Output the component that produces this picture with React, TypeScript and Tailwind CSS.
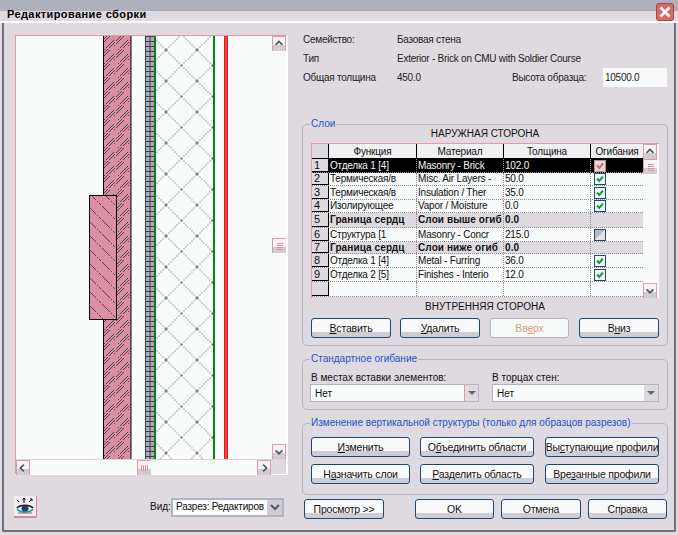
import React from "react";

function Btn({ label, u, w, disabled, ml }: { label: string; u?: number; w: string; disabled?: boolean; ml?: string }) {
  const i = u ?? -1;
  return (
    <button className={`${w} ${ml ?? ""} h-[20px] shrink-0 rounded-[3px] border ${disabled ? "border-[#b5b5c2] bg-[#f8f9f9] text-[#e0a080]" : "border-[#1c4a78] bg-linear-to-b from-[#f9f9f9] from-[72%] to-[#cfcdd3] to-[72%] text-[#111]"} flex items-center justify-center whitespace-nowrap text-[10.5px] tracking-[-0.2px] leading-none`}>
      {i >= 0 ? (
        <span>
          {label.slice(0, i)}
          <span className="underline">{label[i]}</span>
          {label.slice(i + 1)}
        </span>
      ) : (
        label
      )}
    </button>
  );
}

function Group({ title, cls, children }: { title: string; cls: string; children: React.ReactNode }) {
  return (
    <div className={`relative rounded-[5px] border border-[#b3b3c1] ${cls}`}>
      <span className="absolute left-[7px] top-[-8px] bg-[#dfdae0] px-[1px] text-[10px] leading-[14px] whitespace-nowrap text-[#1f4fd0]">{title}</span>
      {children}
    </div>
  );
}

function Arrow({ dir }: { dir: "up" | "down" | "left" | "right" }) {
  const d = { up: "M3 8l4-4 4 4", down: "M3 5l4 4 4-4", left: "M8 3L4 7l4 4", right: "M6 3l4 4-4 4" }[dir];
  return (
    <svg width="14" height="14" viewBox="0 0 14 14" fill="none" stroke="#55555f" strokeWidth="2">
      <path d={d} />
    </svg>
  );
}

function SbBtn({ dir }: { dir: "up" | "down" | "left" | "right" }) {
  return (
    <div className="flex h-[15px] w-[14px] shrink-0 items-center justify-center border-t border-l border-r border-[#e09aa8] bg-linear-to-b from-[#f4f4f4] from-[55%] to-[#cfcdd3] to-[55%]">
      <Arrow dir={dir} />
    </div>
  );
}

function Thumb({ vertical }: { vertical?: boolean }) {
  return (
    <div className="flex h-[15px] w-[14px] shrink-0 items-center justify-center border-t border-l border-[#e09aa8] bg-linear-to-b from-[#f4f4f4] from-[55%] to-[#cfcdd3] to-[55%]">
      <div className={vertical ? "flex flex-col gap-[1px]" : "flex gap-[1px]"}>
        {[0, 1, 2, 3].map((k) => (
          <div key={k} className={vertical ? "h-[1px] w-[6px] bg-[#e58fa0]" : "h-[6px] w-[1px] bg-[#e58fa0]"} />
        ))}
      </div>
    </div>
  );
}

function Check({ state }: { state: "sel" | "on" | "off" }) {
  if (state === "off")
    return <div className="h-[12px] w-[12px] border border-[#1c4a78] bg-linear-to-br from-[#b9b9c4] from-50% to-[#e4e2e8] to-50%" />;
  const sel = state === "sel";
  return (
    <div className={`flex h-[12px] w-[12px] items-center justify-center border ${sel ? "border-[#d08a70] bg-[#e0dadf]" : "border-[#1c4a78] bg-[#f8faf9]"}`}>
      <svg width="10" height="10" viewBox="0 0 10 10" fill="none" stroke={sel ? "#d06a80" : "#12a030"} strokeWidth="2">
        <path d="M2 4.5l2.2 2.5L8 2.5" />
      </svg>
    </div>
  );
}

const rows = [
  { n: "1", h: "h-[14px]", a: "Отделка 1 [4]", b: "Masonry - Brick", c: "102.0", k: "sel", t: "sel" },
  { n: "2", h: "h-[13px]", a: "Термическая/в", b: "Misc. Air Layers -", c: "50.0", k: "on", t: "" },
  { n: "3", h: "h-[14px]", a: "Термическая/в", b: "Insulation / Ther", c: "35.0", k: "on", t: "" },
  { n: "4", h: "h-[13px]", a: "Изолирующее", b: "Vapor / Moisture", c: "0.0", k: "on", t: "" },
  { n: "5", h: "h-[15px]", a: "Граница сердц", b: "Слои выше огиб", c: "0.0", k: "", t: "b" },
  { n: "6", h: "h-[14px]", a: "Структура [1", b: "Masonry - Concr", c: "215.0", k: "off", t: "" },
  { n: "7", h: "h-[12px]", a: "Граница сердц", b: "Слои ниже огиб", c: "0.0", k: "", t: "b" },
  { n: "8", h: "h-[14px]", a: "Отделка 1 [4]", b: "Metal - Furring", c: "36.0", k: "on", t: "" },
  { n: "9", h: "h-[14px]", a: "Отделка 2 [5]", b: "Finishes - Interio", c: "12.0", k: "on", t: "" },
  { n: "", h: "h-[15px]", a: "", b: "", c: "", k: "", t: "" },
] as const;

function Drawing() {
  return (
    <svg width="257" height="423" className="block">
      <defs>
        <pattern id="brick" width="14" height="14" patternUnits="userSpaceOnUse">
          <g stroke="#4a4a55" strokeWidth="1" strokeDasharray="2 1" shapeRendering="crispEdges">
            <path d="M0 7L7 0M7 14L14 7" />
            <path d="M0 10L10 0M4 14L14 4" />
          </g>
        </pattern>
        <pattern id="sold" width="14" height="14" patternUnits="userSpaceOnUse">
          <path d="M0 0L14 14" stroke="#4a4a55" strokeWidth="1" strokeDasharray="2 1" shapeRendering="crispEdges" />
        </pattern>
        <pattern id="ins" x="134.5" y="-1.5" width="31" height="31" patternUnits="userSpaceOnUse">
          <path d="M0 0L31 31M31 0L0 31" stroke="#5c5c68" strokeWidth="1" strokeDasharray="1.4 1.4" shapeRendering="crispEdges" />
          <rect x="14.5" y="14.5" width="2" height="2" fill="#5c5c68" />
        </pattern>
        <pattern id="grid" x="129" y="0" width="5" height="5" patternUnits="userSpaceOnUse">
          <path d="M0 0.5H5" stroke="#3c3c44" strokeWidth="1" />
        </pattern>
      </defs>
      <rect width="257" height="423" fill="#f9fbfa" />
      <rect x="88" y="0" width="27" height="423" fill="#dc8ea2" />
      <rect x="88" y="0" width="27" height="423" fill="url(#brick)" />
      <path d="M87.5 0V159M87.5 283V423M115 0V423" stroke="#000" strokeWidth="1" />
      <rect x="73.5" y="159.5" width="27" height="124" fill="#dc8ea2" />
      <rect x="73.5" y="159.5" width="27" height="124" fill="url(#sold)" />
      <rect x="73.5" y="159.5" width="27" height="124" fill="none" stroke="#000" />
      <rect x="129" y="0" width="9" height="423" fill="#a9abb8" />
      <rect x="129" y="0" width="9" height="423" fill="url(#grid)" />
      <path d="M129.5 0V423M134 0V423" stroke="#3c3c44" />
      <rect x="140" y="0" width="57" height="423" fill="url(#ins)" />
      <rect x="138" y="0" width="2" height="423" fill="#0a8018" />
      <rect x="197" y="0" width="2" height="423" fill="#0a8018" />
      <rect x="208" y="0" width="4" height="423" fill="#ff3c3c" />
      <path d="M208.5 0V423M211.5 0V423" stroke="#e81c1c" />
    </svg>
  );
}

export default function App() {
  return (
    <div className="h-[535px] w-[678px] overflow-hidden bg-[#dfdae0] font-['Liberation_Sans',sans-serif] text-[10px] text-[#111]">
      {/* title bar */}
      <div className="relative h-[23px] border-b-2 border-white bg-linear-to-b from-[#aeb0bc] from-[52%] to-[#dfdae0] to-[52%]">
        <span className="absolute left-[7px] top-[7px] text-[11px] font-bold leading-[14px] tracking-[0.4px] text-black">Редактирование сборки</span>
        <div className="absolute right-[4px] top-[3px] flex h-[18px] w-[18px] items-center justify-center rounded-[3px] border border-[#9e4a48] bg-[#dc6a64]">
          <svg width="14" height="14" viewBox="0 0 14 14" stroke="#fff" strokeWidth="2.6">
            <path d="M2.5 2.5l9 9M11.5 2.5l-9 9" />
          </svg>
        </div>
      </div>
      {/* body frame */}
      <div className="mx-[2px] flex h-[509px] rounded-b-[2px] border-[2px] border-t-0 border-[#6e7082]">
        {/* left column */}
        <div className="w-[298px] shrink-0 pl-[11px] pt-[12px]">
          <div className="flex h-[440px] w-[273px] flex-col border-t border-l border-[#e09aa8] border-b-2 border-b-white border-r-2 border-r-white">
            <div className="flex h-[423px]">
              <Drawing />
              <div className="flex w-[14px] flex-col justify-between bg-[#f9fbfa]">
                <SbBtn dir="up" />
                <div className="mt-[187px]">
                  <Thumb vertical />
                </div>
                <div className="flex-1" />
                <SbBtn dir="down" />
              </div>
            </div>
            <div className="flex h-[15px] border-t border-[#d8d4dc] bg-[#f9fbfa]">
              <SbBtn dir="left" />
              <div className="ml-[107px]">
                <Thumb />
              </div>
              <div className="ml-[106px]">
                <SbBtn dir="right" />
              </div>
              <div className="w-[14px] flex-1 bg-[#dfdae0]" />
            </div>
          </div>
          <div className="mt-[21px] -ml-[1px] flex items-center">
            <div className="flex h-[22px] w-[23px] shrink-0 items-center justify-center border-r border-b-2 border-[#d88a9c] bg-[#f0eef1]">
              <svg width="20" height="18" viewBox="0 0 20 18" fill="none">
                <path d="M9 6V1M7.5 3L9 1l1.5 2M14 5l3-3M15 2h2v2M4 5L2 3" stroke="#111" strokeWidth="1" />
                <path d="M2 12c3 4 13 4 16 0" stroke="#0aa0c0" strokeWidth="1.4" />
                <path d="M2 11c3-3.500 13-3.500 16 0" stroke="#222" strokeWidth="1.8" />
                <ellipse cx="10" cy="11.500" rx="3.500" ry="3" fill="#2a3a66" />
                <path d="M3 16h14" stroke="#6a6a78" strokeWidth="1" />
              </svg>
            </div>
            <span className="ml-[113px] w-[19px] shrink-0 whitespace-nowrap leading-none">Вид:</span>
            <div className="ml-[2px] flex h-[19px] w-[113px] shrink-0 items-center border-2 border-[#b3b3c1] bg-[#f9fbfa]">
              <span className="w-[94px] overflow-hidden whitespace-nowrap pl-[3px] tracking-[-0.2px] leading-none">Разрез: Редактиров</span>
              <div className="flex h-full flex-1 items-center justify-center bg-[#cfcdd3]">
                <Arrow dir="down" />
              </div>
            </div>
          </div>
        </div>
        {/* right column */}
        <div className="w-[372px] shrink-0 pt-[7px]">
          <div className="flex h-[19px] items-center whitespace-nowrap pl-[1px] tracking-[-0.25px] text-[#222]">
            <span className="w-[94px]">Семейство:</span>
            <span>Базовая стена</span>
          </div>
          <div className="flex h-[19px] items-center whitespace-nowrap pl-[1px] tracking-[-0.25px] text-[#222]">
            <span className="w-[94px]">Тип</span>
            <span>Exterior - Brick on CMU with Soldier Course</span>
          </div>
          <div className="flex h-[19px] items-center whitespace-nowrap pl-[1px] tracking-[-0.25px] text-[#222]">
            <span className="w-[94px]">Общая толщина</span>
            <span className="w-[115px]">450.0</span>
            <span className="w-[91px]">Высота образца:</span>
            <div className="flex h-[19px] w-[64px] items-center bg-[#f9fbfa] pl-[2px]">10500.0</div>
          </div>
          {/* layers */}
          <Group title="Слои" cls="mt-[37px] h-[222px] w-[366px] pl-[8px]">
            <div className="h-[18px] pr-[8px] pt-[2px] text-center leading-[14px]">НАРУЖНАЯ СТОРОНА</div>
            <div className="flex h-[155px] w-[348px] border-t border-l border-[#e09aa8] tracking-[-0.2px]">
              <div className="w-[331px]">
                <div className="flex h-[15px] border-b border-black text-center">
                  <div className="w-[17px] border-r border-black bg-[#dfdae0]" />
                  <div className="w-[88px] border-r border-black bg-[#f0eff1] leading-[15px]">Функция</div>
                  <div className="w-[87px] border-r border-black bg-[#f0eff1] leading-[15px]">Материал</div>
                  <div className="w-[87px] border-r border-black bg-[#f0eff1] leading-[15px]">Толщина</div>
                  <div className="flex-1 bg-[#f0eff1] leading-[15px]">Огибания</div>
                </div>
                {rows.map((r, i) => {
                  const sel = r.t === "sel";
                  const bold = r.t === "b";
                  return (
                    <div key={i} className={`flex ${r.h} border-b border-dotted border-[#8c8c98] ${sel ? "bg-black text-[#f4f4f4]" : bold ? "bg-[#dfdae0] tracking-[0.1px]" : "bg-[#f9fbfa]"} ${bold ? "font-bold" : ""} items-stretch leading-none`}>
                      <div className="flex w-[17px] shrink-0 items-center border-r border-b border-black bg-[#dfdae0] pl-[2px] text-[11px] font-normal text-[#111]">{r.n}</div>
                      <div className="flex w-[88px] shrink-0 items-center overflow-hidden whitespace-nowrap border-r border-dotted border-[#8c8c98] pl-[1px]">{r.a}</div>
                      <div className="flex w-[87px] shrink-0 items-center overflow-hidden whitespace-nowrap border-r border-dotted border-[#8c8c98] pl-[1px]">{r.b}</div>
                      <div className="flex w-[87px] shrink-0 items-center overflow-hidden whitespace-nowrap border-r border-dotted border-[#8c8c98] pl-[1px]">{r.c}</div>
                      <div className="flex flex-1 items-center pl-[3px]">{r.k ? <Check state={r.k as "sel" | "on" | "off"} /> : null}</div>
                    </div>
                  );
                })}
              </div>
              <div className="flex w-[16px] flex-col bg-[#f9fbfa]">
                <SbBtn dir="up" />
                <Thumb vertical />
                <div className="flex-1" />
                <SbBtn dir="down" />
              </div>
            </div>
            <div className="mt-[1px] h-[16px] pr-[8px] text-center leading-[16px]">ВНУТРЕННЯЯ СТОРОНА</div>
            <div className="mt-[3px] flex">
              <Btn label="Вставить" u={0} w="w-[80px]" />
              <Btn label="Удалить" u={0} w="w-[80px]" ml="ml-[9px]" />
              <Btn label="Вверх" u={2} w="w-[79px]" ml="ml-[10px]" disabled />
              <Btn label="Вниз" u={1} w="w-[80px]" ml="ml-[10px]" />
            </div>
          </Group>
          {/* standard wrap */}
          <Group title="Стандартное огибание" cls="mt-[13px] h-[51px] w-[366px] pl-[8px] pt-[11px]">
            <div className="flex">
              <div className="w-[181px]">
                <div className="h-[13px] whitespace-nowrap leading-[13px]">В местах вставки элементов:</div>
                <div className="-ml-[1px] flex h-[18px] w-[169px] items-center border border-[#b3b3c1] bg-[#f9fbfa] pl-[4px]">
                  <span className="flex-1">Нет</span>
                  <div className="flex h-full w-[14px] items-center justify-center border-l border-[#e09aa8] bg-[#dfdae0]">
                    <svg width="10" height="6"><path d="M1 1h8L5 5z" fill="#66666f" /></svg>
                  </div>
                </div>
              </div>
              <div>
                <div className="h-[13px] whitespace-nowrap leading-[13px]">В торцах стен:</div>
                <div className="flex h-[18px] w-[167px] items-center border border-[#b3b3c1] bg-[#f9fbfa] pl-[4px]">
                  <span className="flex-1">Нет</span>
                  <div className="flex h-full w-[14px] items-center justify-center bg-[#dfdae0]">
                    <svg width="10" height="6"><path d="M1 1h8L5 5z" fill="#66666f" /></svg>
                  </div>
                </div>
              </div>
            </div>
          </Group>
          {/* vertical */}
          <Group title="Изменение вертикальной структуры (только для образцов разрезов)" cls="mt-[13px] h-[72px] w-[366px] pl-[8px] pt-[13px]">
            <div className="flex">
              <Btn label="Изменить" u={0} w="w-[99px]" />
              <Btn label="Объединить области" u={1} w="w-[114px]" ml="ml-[10px]" />
              <Btn label="Выступающие профили" u={2} w="w-[114px]" ml="ml-[11px]" />
            </div>
            <div className="mt-[7px] flex">
              <Btn label="Назначить слои" u={1} w="w-[99px]" />
              <Btn label="Разделить область" u={0} w="w-[114px]" ml="ml-[10px]" />
              <Btn label="Врезанные профили" u={3} w="w-[114px]" ml="ml-[11px]" />
            </div>
          </Group>
          {/* bottom */}
          <div className="mt-[4px] ml-[2px] flex">
            <Btn label="Просмотр >>" w="w-[80px]" />
            <Btn label="OK" w="w-[79px]" ml="ml-[31px]" />
            <Btn label="Отмена" w="w-[80px]" ml="ml-[7px]" />
            <Btn label="Справка" w="w-[79px]" ml="ml-[7px]" />
          </div>
        </div>
      </div>
    </div>
  );
}
